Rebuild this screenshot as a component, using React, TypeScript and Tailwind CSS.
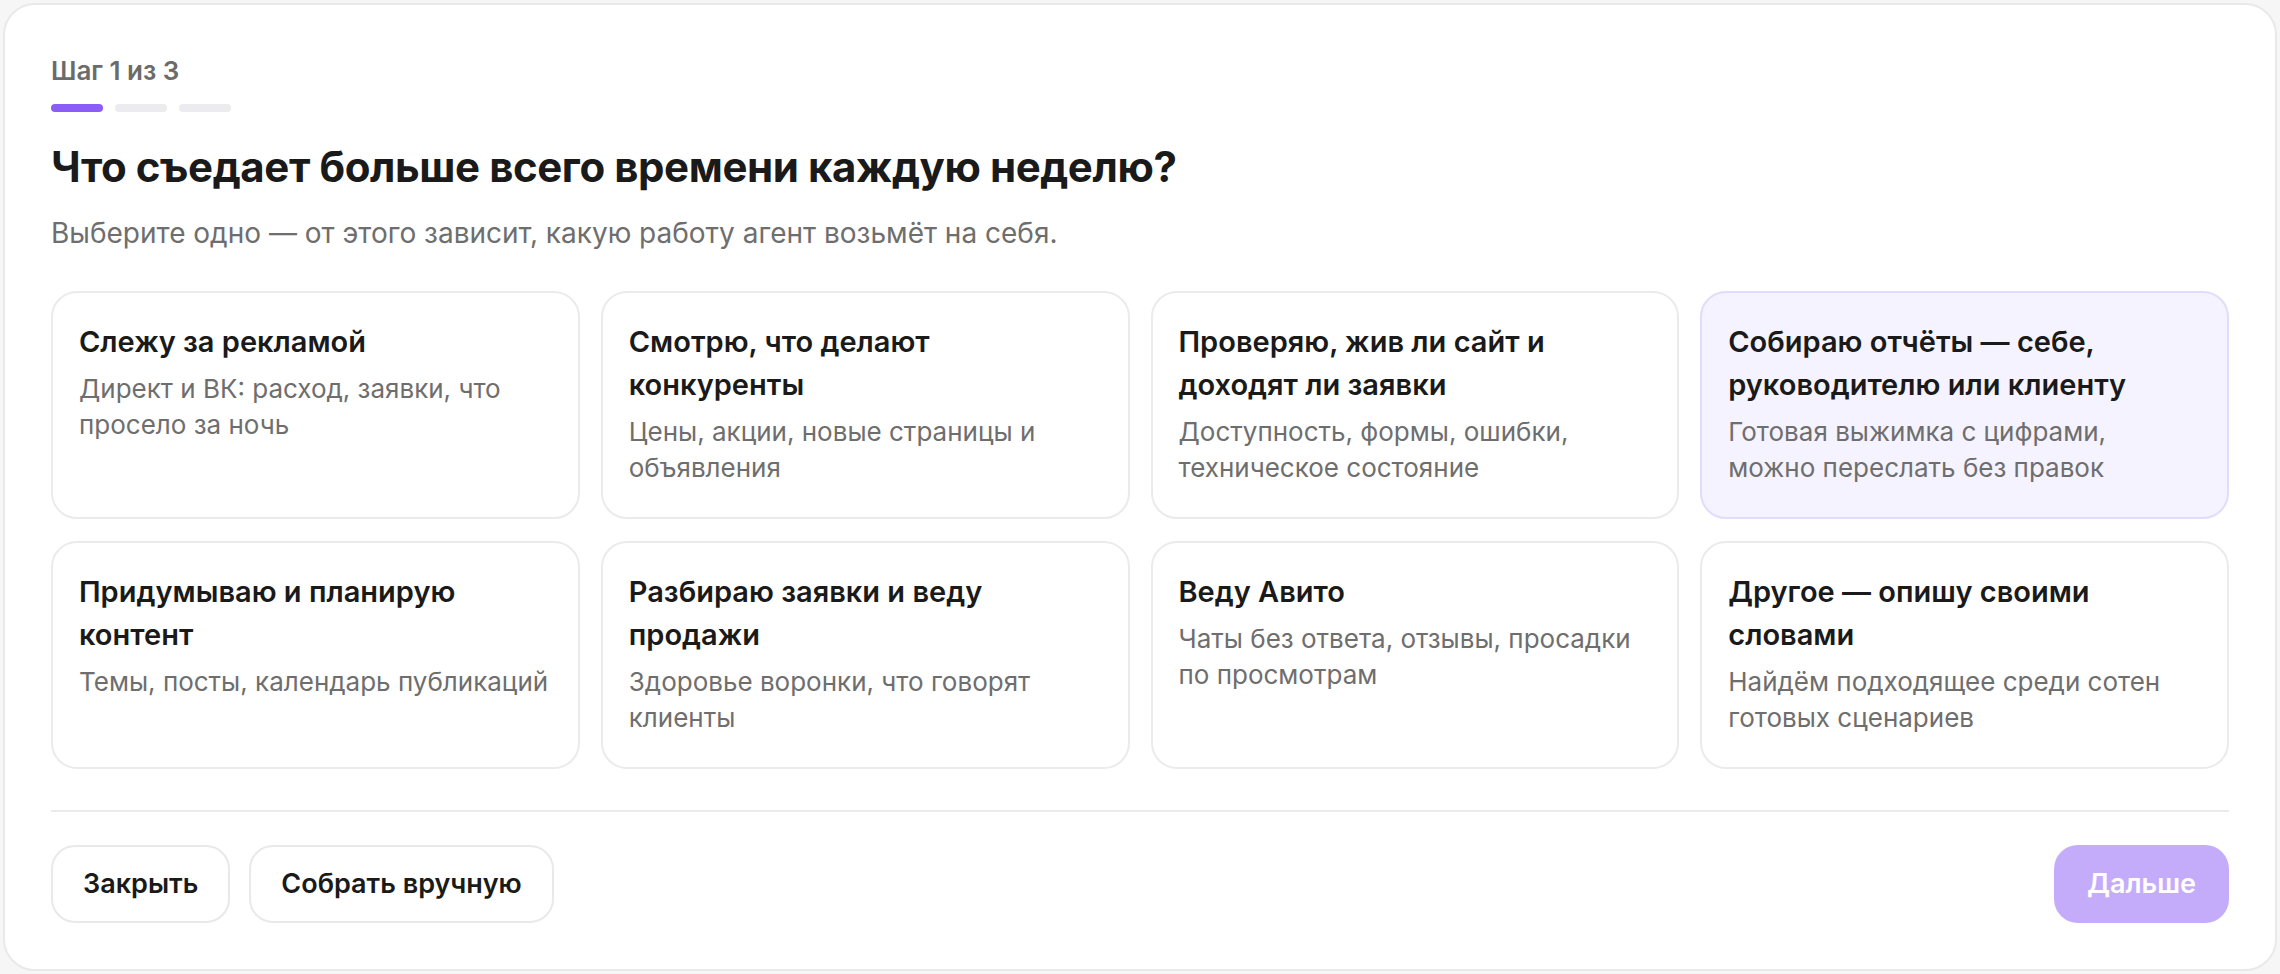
import { useState } from "react";

// lines are split as in the mockup so the cards wrap the same way
const OPTIONS = [
  { title: ["Слежу за рекламой"], desc: ["Директ и ВК: расход, заявки, что", "просело за ночь"] },
  { title: ["Смотрю, что делают", "конкуренты"], desc: ["Цены, акции, новые страницы и", "объявления"] },
  { title: ["Проверяю, жив ли сайт и", "доходят ли заявки"], desc: ["Доступность, формы, ошибки,", "техническое состояние"] },
  { title: ["Собираю отчёты — себе,", "руководителю или клиенту"], desc: ["Готовая выжимка с цифрами,", "можно переслать без правок"] },
  { title: ["Придумываю и планирую", "контент"], desc: ["Темы, посты, календарь публикаций"] },
  { title: ["Разбираю заявки и веду", "продажи"], desc: ["Здоровье воронки, что говорят", "клиенты"] },
  { title: ["Веду Авито"], desc: ["Чаты без ответа, отзывы, просадки", "по просмотрам"] },
  { title: ["Другое — опишу своими", "словами"], desc: ["Найдём подходящее среди сотен", "готовых сценариев"] },
];

export default function App() {
  // hovered card gets the lavender tint, like the screenshot
  const [hovered, setHovered] = useState<number | null>(3);

  return (
    <div
      className="h-[974px] bg-[#f6f6f6] p-[3px]"
      style={{ fontFamily: "Inter, 'Noto Sans', sans-serif" }}
    >
      <div className="flex h-full flex-col rounded-[32px] border-2 border-[#e9e9e9] bg-white px-[46px] pt-[48px]">
        <div className="text-[26px] font-semibold leading-[36px] text-[#6b6b6b]">Шаг 1 из 3</div>

        <div className="mt-[15px] flex gap-[12px]">
          <div className="h-[8px] w-[52px] rounded-full bg-[#8b5cf6]" />
          <div className="h-[8px] w-[52px] rounded-full bg-[#ebebf0]" />
          <div className="h-[8px] w-[52px] rounded-full bg-[#ebebf0]" />
        </div>

        <h1 className="mt-[30px] text-[42px] font-bold leading-[50px] tracking-[-0.01em] text-[#1a1a1a]">
          Что съедает больше всего времени каждую неделю?
        </h1>
        <p className="mt-[22px] text-[28px] leading-[39px] text-[#6e6e6e]">
          Выберите одно — от этого зависит, какую работу агент возьмёт на себя.
        </p>

        <div className="mt-[38px] grid grid-cols-4 gap-x-[21px] gap-y-[22px]">
          {OPTIONS.map((o, i) => (
            <button
              key={o.title[0]}
              onMouseEnter={() => setHovered(i)}
              className={`h-[228px] rounded-[26px] border-2 px-[26px] pt-[27px] text-left ${
                hovered === i ? "border-[#e2dbfb] bg-[#f5f3ff]" : "border-[#ebebeb] bg-white"
              }`}
            >
              <div className="flex h-full flex-col">
                <div className="text-[29px] font-semibold leading-[43px] text-[#1a1a1a]">
                  {o.title.map((l) => (
                    <span key={l} className="block whitespace-nowrap">{l}</span>
                  ))}
                </div>
                <div className="mt-[8px] text-[26px] leading-[36px] text-[#6e6e6e]">
                  {o.desc.map((l) => (
                    <span key={l} className="block whitespace-nowrap">{l}</span>
                  ))}
                </div>
              </div>
            </button>
          ))}
        </div>

        <div className="mt-[41px] h-[2px] bg-[#ebebeb]" />

        <div className="mt-[33px] flex items-center gap-[19px]">
          <button className="h-[78px] rounded-[24px] border-2 border-[#e9e9e9] bg-white px-[30px] text-[27px] font-semibold text-[#1a1a1a]">
            Закрыть
          </button>
          <button className="h-[78px] rounded-[24px] border-2 border-[#e9e9e9] bg-white px-[30px] text-[27px] font-semibold text-[#1a1a1a]">
            Собрать вручную
          </button>
          <button
            disabled
            className="ml-auto h-[78px] rounded-[24px] bg-[#8b5cf6] px-[33px] text-[27px] font-semibold text-white opacity-50"
          >
            Дальше
          </button>
        </div>
      </div>
    </div>
  );
}
